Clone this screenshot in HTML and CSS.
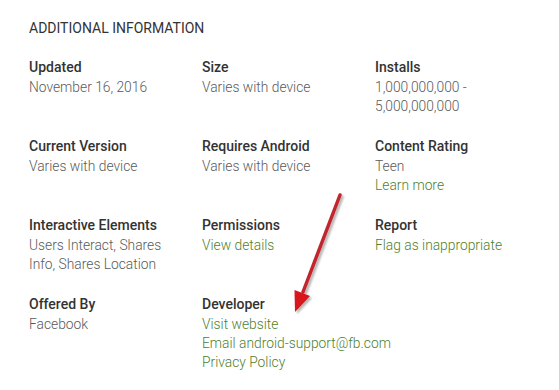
FILE: index.html
```html
<!DOCTYPE html>
<html>
<head>
<meta charset="utf-8">
<link rel="stylesheet" href="styles.css">
</head>
<body>
<div class="page">
  <h2 class="section-title">ADDITIONAL INFORMATION</h2>
  <div class="details">
    <div class="item">
      <div class="label">Updated</div>
      <div class="value">November 16, 2016</div>
    </div>
    <div class="item">
      <div class="label">Size</div>
      <div class="value">Varies with device</div>
    </div>
    <div class="item">
      <div class="label">Installs</div>
      <div class="value">1,000,000,000 -<br>5,000,000,000</div>
    </div>
    <div class="item">
      <div class="label">Current Version</div>
      <div class="value">Varies with device</div>
    </div>
    <div class="item">
      <div class="label">Requires Android</div>
      <div class="value">Varies with device</div>
    </div>
    <div class="item">
      <div class="label">Content Rating</div>
      <div class="value">Teen</div>
      <a class="link">Learn more</a>
    </div>
    <div class="item">
      <div class="label">Interactive Elements</div>
      <div class="value">Users Interact, Shares<br>Info, Shares Location</div>
    </div>
    <div class="item">
      <div class="label">Permissions</div>
      <a class="link">View details</a>
    </div>
    <div class="item">
      <div class="label">Report</div>
      <a class="link">Flag as inappropriate</a>
    </div>
    <div class="item">
      <div class="label">Offered By</div>
      <div class="value">Facebook</div>
    </div>
    <div class="item">
      <div class="label">Developer</div>
      <a class="link">Visit website</a>
      <a class="link">Email android-support@fb.com</a>
      <a class="link">Privacy Policy</a>
    </div>
  </div>
  <svg class="arrow" width="60" height="135" viewBox="0 0 60 135">
    <defs>
      <filter id="sh" x="-50%" y="-20%" width="200%" height="140%">
        <feGaussianBlur in="SourceAlpha" stdDeviation="1.3"/>
        <feOffset dx="1.5" dy="1.5" result="b"/>
        <feComponentTransfer><feFuncA type="linear" slope="0.3"/></feComponentTransfer>
        <feMerge><feMergeNode/><feMergeNode in="SourceGraphic"/></feMerge>
      </filter>
    </defs>
    <g filter="url(#sh)">
      <line x1="50" y1="10" x2="13" y2="107" stroke="#c1272d" stroke-width="3.5" stroke-linecap="round"/>
      <polygon points="5,127 4.5,105 20,111" fill="#d8121b"/>
    </g>
  </svg>
</div>
</body>
</html>
```
FILE: styles.css
```css
html, body {
  margin: 0;
  padding: 0;
  background: #ffffff;
}
.page {
  position: relative;
  width: 559px;
  height: 390px;
  padding: 17.5px 0 0 29px;
  box-sizing: border-box;
  font-family: Roboto, "Liberation Sans", sans-serif;
}
.section-title {
  margin: 0 0 18px 0;
  font-size: 14px;
  line-height: 20px;
  font-weight: 400;
  color: #333333;
}
.details {
  display: grid;
  grid-template-columns: 173px 173px 173px;
  grid-auto-rows: 60px;
  row-gap: 19px;
}
.item {
  display: flex;
  flex-direction: column;
  align-items: flex-start;
}
.label {
  font-size: 14px;
  line-height: 22px;
  font-weight: 500;
  color: #333333;
  white-space: nowrap;
}
.value {
  font-size: 13.8px;
  line-height: 19px;
  font-weight: 300;
  color: #5a5a5a;
  white-space: nowrap;
}
.link {
  font-size: 13.8px;
  line-height: 19px;
  font-weight: 300;
  color: #4f7f2e;
  text-decoration: none;
  white-space: nowrap;
}
.arrow {
  position: absolute;
  left: 290px;
  top: 185px;
}
```
